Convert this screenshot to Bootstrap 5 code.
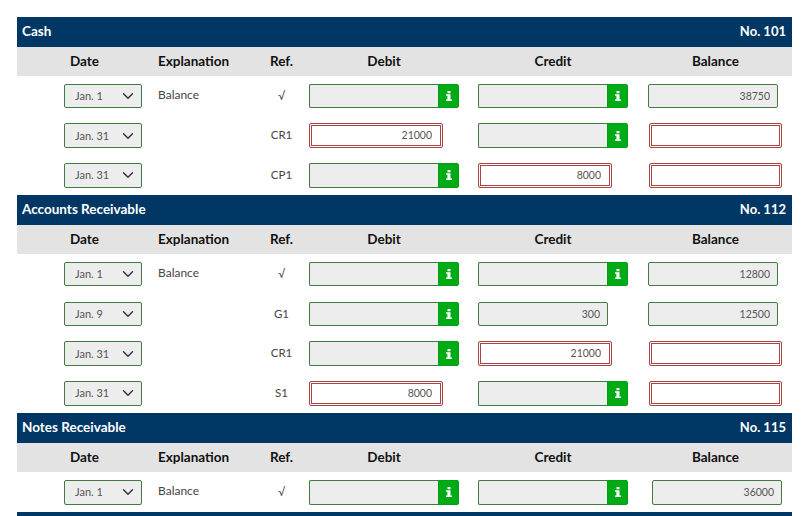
<!DOCTYPE html>
<html lang="en">
<head>
<meta charset="utf-8">
<title>General Ledger</title>
<link href="https://cdn.jsdelivr.net/npm/bootstrap@5.3.0/dist/css/bootstrap.min.css" rel="stylesheet">
<style>
html,body{height:516px;overflow:hidden;background:#fff}
body{font-family:"Lato","Liberation Sans",sans-serif;font-size:12px;color:#444;margin:0}
.topline{height:17px;overflow:hidden;text-align:center;padding-left:6px}
.topline a{display:block;margin-top:-14px;font-size:12px;line-height:16px;color:#333}
.ledger-wrap{width:775px;margin-left:17px}
.ledger{table-layout:fixed;width:775px;margin:0;border-collapse:collapse}
.ledger>*>tr>*{padding:0;border:0;background:transparent;box-shadow:none;color:inherit;vertical-align:middle}
.ledger .acct>th{height:30px;background:#003764;color:#fff;font-weight:700;font-size:13.5px;padding:0 5px 2px}
.ledger .acct>th.text-end{font-size:13px;padding:0 6px 0 5px}
.ledger .acct>th.endbar{height:4px;padding:0;font-size:0;line-height:0}
.ledger .cols>th{height:29px;background:#e3e3e3;color:#111;font-weight:700;font-size:13.5px;text-align:center}
.ledger .cols>th.expl{text-align:left;padding-left:8px}
.ledger .cols>th.dh{padding-left:2px}
.ledger .cols>th.bh{padding-right:4px}
.ledger .r40{height:40px}
.ledger .r39{height:39px}
.ledger .r40>td,.ledger .r39>td{color:#444;font-size:12px}
.ledger td.exp{padding:0 0 2px 8px}
.ledger td.ref{text-align:center;font-size:11.5px;padding-bottom:1px}
.dt{width:78px;margin-left:47px;height:25px;font-size:11px;color:#555;background-color:#ededed;border:1px solid #437a43;border-radius:2px;padding:0 24px 1px 10px;background-position:right 5px center;background-size:16px 12px;line-height:1}
.r40.short .dt{height:24px}
.fld{width:150px;flex-wrap:nowrap;margin:0 auto;height:25px}
.short .fld{height:24px}
.fake,.ans{display:block;font-size:10.5px;text-align:right;color:#555;border-radius:2px;height:25px;line-height:1;padding:0 7px 1px 5px}
.fake{background:#ededed;border:1px solid #437a43;width:130px}
.fld .fake{flex:1 1 auto;width:auto;border-right:0;border-radius:2px 0 0 2px;height:100%;min-width:0}
.short .fake{height:24px}
.ans{background:#fff;border:1px solid #a94442;box-shadow:inset 0 0 0 1px #fff,inset 0 0 0 2px #a94442;width:134px;padding-right:10px}
.info{flex:0 0 21px;width:21px;background:#00ab16;border:1px solid #00a013;border-radius:0 2px 2px 0;padding:0;display:flex;align-items:center;justify-content:center}
.input-group>.info{margin-left:0}
.info svg{width:6px;height:10px;fill:#fff;display:block}
.db .ans{margin-left:4px}
.bl .fake{margin-left:5px}
.bl .ans{margin-left:6px;width:133px}
.bl .fake.alt{margin-left:9px}
input.fake:focus,input.ans:focus{outline:0}
</style>
</head>
<body>
<div class="topline"><a href="#"><strong>General Ledger</strong></a></div>
<svg class="d-none"><symbol id="i-info" viewBox="0 0 6 10"><path d="M1.5 0h3v2.2h-3zM0 3.2h4.5v5.2H6V10H0V8.4h1.4V4.8H0z"/></symbol></svg>
<div class="ledger-wrap">
<table class="table ledger">
<colgroup><col style="width:133px"><col style="width:108px"><col style="width:47px"><col style="width:158px"><col style="width:15px"><col style="width:150px"><col style="width:15px"><col></colgroup>
<tbody>
<tr class="acct"><th colspan="4">Cash</th><th colspan="4" class="text-end">No. 101</th></tr>
<tr class="cols"><th class="dh">Date</th><th class="expl">Explanation</th><th>Ref.</th><th>Debit</th><th colspan="3">Credit</th><th class="bh">Balance</th></tr>
<tr class="r40 short"><td><select class="form-select dt"><option>Jan. 1</option></select></td><td class="exp">Balance</td><td class="ref">√</td><td><div class="input-group fld"><input class="fake" readonly><span class="info"><svg><use href="#i-info"/></svg></span></div></td><td></td><td><div class="input-group fld"><input class="fake" readonly><span class="info"><svg><use href="#i-info"/></svg></span></div></td><td></td><td class="bl"><input class="fake" readonly value="38750"></td></tr>
<tr class="r39"><td><select class="form-select dt"><option>Jan. 31</option></select></td><td></td><td class="ref">CR1</td><td class="db"><input class="ans" value="21000"></td><td></td><td><div class="input-group fld"><input class="fake" readonly><span class="info"><svg><use href="#i-info"/></svg></span></div></td><td></td><td class="bl"><input class="ans"></td></tr>
<tr class="r40"><td><select class="form-select dt"><option>Jan. 31</option></select></td><td></td><td class="ref">CP1</td><td><div class="input-group fld"><input class="fake" readonly><span class="info"><svg><use href="#i-info"/></svg></span></div></td><td></td><td><input class="ans" value="8000"></td><td></td><td class="bl"><input class="ans"></td></tr>

<tr class="acct"><th colspan="4">Accounts Receivable</th><th colspan="4" class="text-end">No. 112</th></tr>
<tr class="cols"><th class="dh">Date</th><th class="expl">Explanation</th><th>Ref.</th><th>Debit</th><th colspan="3">Credit</th><th class="bh">Balance</th></tr>
<tr class="r40 short"><td><select class="form-select dt"><option>Jan. 1</option></select></td><td class="exp">Balance</td><td class="ref">√</td><td><div class="input-group fld"><input class="fake" readonly><span class="info"><svg><use href="#i-info"/></svg></span></div></td><td></td><td><div class="input-group fld"><input class="fake" readonly><span class="info"><svg><use href="#i-info"/></svg></span></div></td><td></td><td class="bl"><input class="fake" readonly value="12800"></td></tr>
<tr class="r40 short"><td><select class="form-select dt"><option>Jan. 9</option></select></td><td></td><td class="ref">G1</td><td><div class="input-group fld"><input class="fake" readonly><span class="info"><svg><use href="#i-info"/></svg></span></div></td><td></td><td><input class="fake" readonly value="300"></td><td></td><td class="bl"><input class="fake" readonly value="12500"></td></tr>
<tr class="r39"><td><select class="form-select dt"><option>Jan. 31</option></select></td><td></td><td class="ref">CR1</td><td><div class="input-group fld"><input class="fake" readonly><span class="info"><svg><use href="#i-info"/></svg></span></div></td><td></td><td><input class="ans" value="21000"></td><td></td><td class="bl"><input class="ans"></td></tr>
<tr class="r40"><td><select class="form-select dt"><option>Jan. 31</option></select></td><td></td><td class="ref">S1</td><td class="db"><input class="ans" value="8000"></td><td></td><td><div class="input-group fld"><input class="fake" readonly><span class="info"><svg><use href="#i-info"/></svg></span></div></td><td></td><td class="bl"><input class="ans"></td></tr>

<tr class="acct"><th colspan="4">Notes Receivable</th><th colspan="4" class="text-end">No. 115</th></tr>
<tr class="cols"><th class="dh">Date</th><th class="expl">Explanation</th><th>Ref.</th><th>Debit</th><th colspan="3">Credit</th><th class="bh">Balance</th></tr>
<tr class="r40"><td><select class="form-select dt"><option>Jan. 1</option></select></td><td class="exp">Balance</td><td class="ref">√</td><td><div class="input-group fld"><input class="fake" readonly><span class="info"><svg><use href="#i-info"/></svg></span></div></td><td></td><td><div class="input-group fld"><input class="fake" readonly><span class="info"><svg><use href="#i-info"/></svg></span></div></td><td></td><td class="bl"><input class="fake alt" readonly value="36000"></td></tr>
<tr class="acct"><th colspan="8" class="endbar"></th></tr>
</tbody>
</table>
</div>
<script src="https://cdn.jsdelivr.net/npm/bootstrap@5.3.0/dist/js/bootstrap.bundle.min.js"></script>
</body>
</html>
